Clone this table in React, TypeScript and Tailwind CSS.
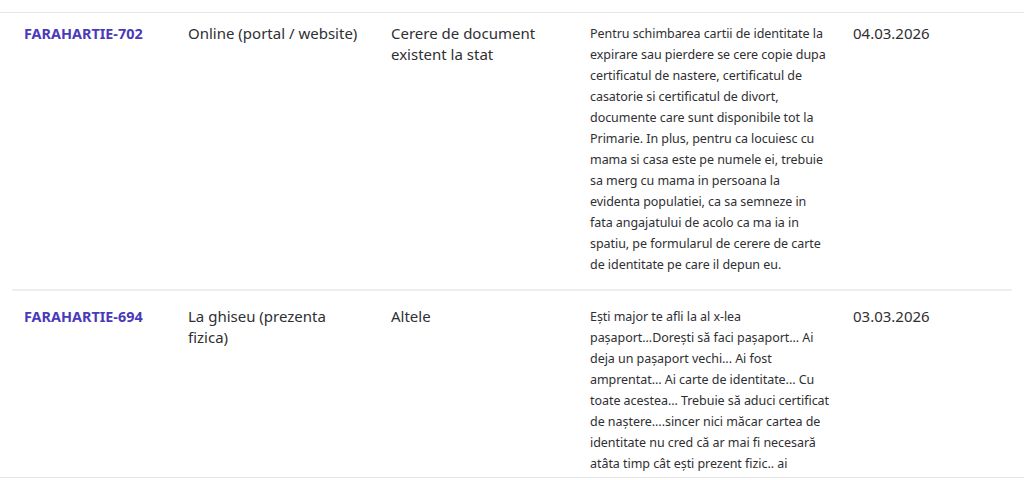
const rows = [
  {
    id: 'FARAHARTIE-702',
    channel: 'Online (portal / website)',
    type: 'Cerere de document existent la stat',
    description:
      'Pentru schimbarea cartii de identitate la expirare sau pierdere se cere copie dupa certificatul de nastere, certificatul de casatorie si certificatul de divort, documente care sunt disponibile tot la Primarie. In plus, pentru ca locuiesc cu mama si casa este pe numele ei, trebuie sa merg cu mama in persoana la evidenta populatiei, ca sa semneze in fata angajatului de acolo ca ma ia in spatiu, pe formularul de cerere de carte de identitate pe care il depun eu.',
    date: '04.03.2026',
  },
  {
    id: 'FARAHARTIE-694',
    channel: 'La ghiseu (prezenta fizica)',
    type: 'Altele',
    description:
      'Ești major te afli la al x-lea pașaport...Dorești să faci pașaport... Ai deja un pașaport vechi... Ai fost amprentat... Ai carte de identitate... Cu toate acestea... Trebuie să aduci certificat de naștere....sincer nici măcar cartea de identitate nu cred că ar mai fi necesară atâta timp cât ești prezent fizic.. ai amprentele deja luate, ai poză, datele sunt în sistem.',
    date: '03.03.2026',
  },
]

export default function App() {
  return (
    <div className="h-[480px] w-[1024px] bg-white pt-3 font-['Noto_Sans','Open_Sans',sans-serif] text-[#2f2f33]">
      <div className="h-[466px] overflow-hidden border-y border-[#e6e6e8] px-3">
        {rows.map((r, i) => {
          const pad = i === 0 ? 'pt-[10px] pb-[14px]' : 'pt-[15px] pb-3'
          return (
            <div
              key={r.id}
              className={
                'grid grid-cols-[164px_203px_199px_263px_1fr] ' +
                (i > 0 ? 'border-t-2 border-[#eeeef0]' : '')
              }
            >
              <div className={'px-3 text-[14.4px] font-bold leading-[21px] text-[#4a3aba] ' + pad}>
                {r.id}
              </div>
              <div className={'px-3 text-[15px] leading-[21px] ' + pad}>{r.channel}</div>
              <div className={'px-3 text-[15px] leading-[21px] ' + pad}>{r.type}</div>
              <div className={'pl-3 pr-[10px] text-[12.5px] leading-[21px] tracking-[-0.05px] ' + pad}>
                {r.description}
              </div>
              <div className={'px-3 text-[15px] leading-[21px] ' + pad}>{r.date}</div>
            </div>
          )
        })}
      </div>
    </div>
  )
}
